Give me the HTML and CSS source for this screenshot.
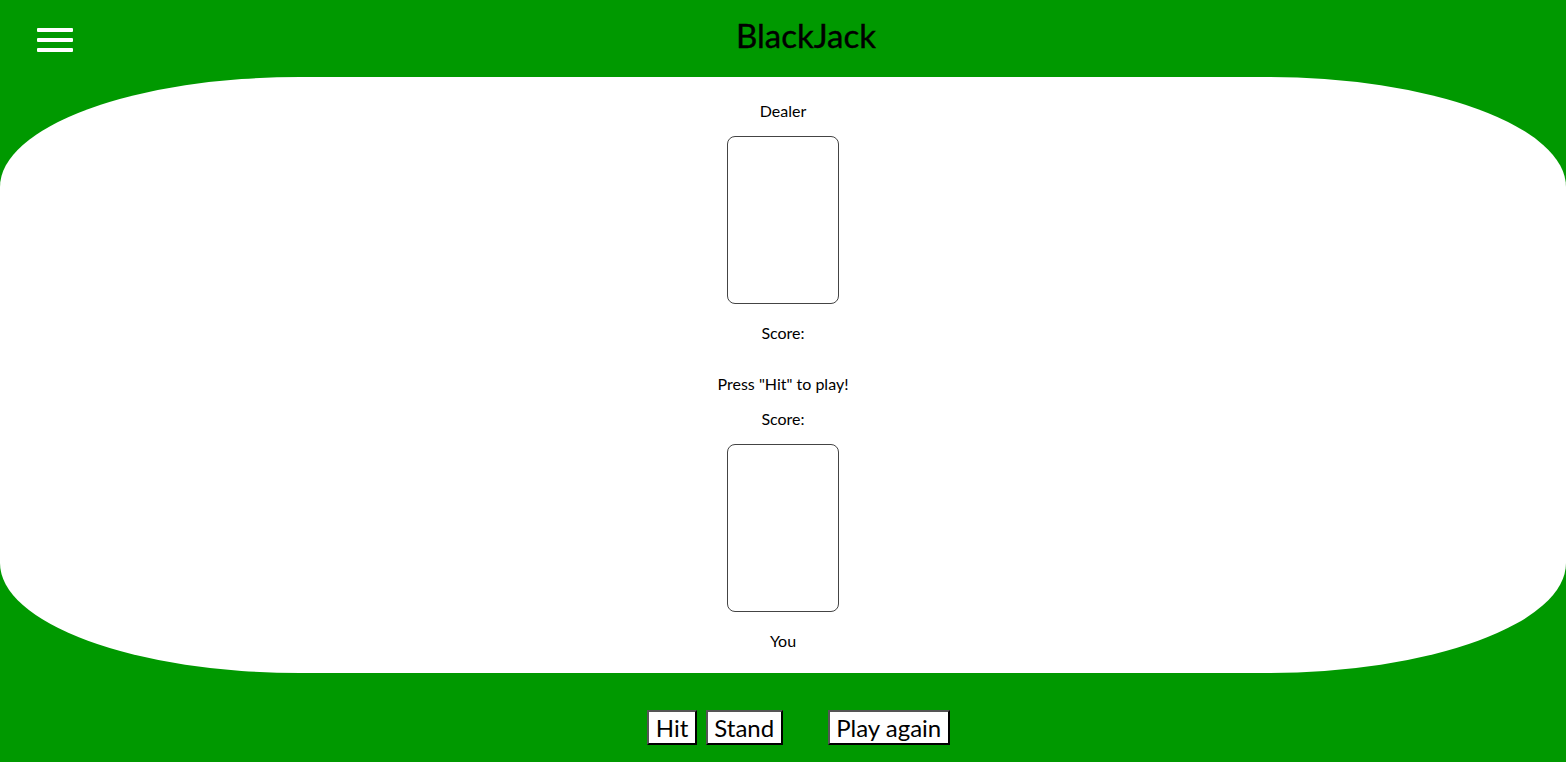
FILE: index.html
```html
<!DOCTYPE html>
<html lang="en">
<head>
<meta charset="utf-8">
<title>BlackJack</title>
<link rel="stylesheet" href="styles.css">
</head>
<body>
<header class="topbar">
  <button class="menu" aria-label="Menu">
    <span class="bar"></span>
    <span class="bar"></span>
    <span class="bar"></span>
  </button>
  <h1 class="title">BlackJack</h1>
  <div class="spacer"></div>
</header>
<main class="table">
  <p class="label first">Dealer</p>
  <div class="card"></div>
  <p class="label after-card">Score:</p>
  <p class="label message">Press "Hit" to play!</p>
  <p class="label score2">Score:</p>
  <div class="card"></div>
  <p class="label after-card">You</p>
</main>
<div class="controls">
  <button class="btn">Hit</button>
  <button class="btn">Stand</button>
  <button class="btn again">Play again</button>
</div>
</body>
</html>
```

FILE: styles.css
```css
* { box-sizing: border-box; }
html, body { margin: 0; padding: 0; }
body {
  background: #009900;
  font-family: Lato, "Liberation Sans", sans-serif;
  color: #000;
  height: 762px;
  overflow: hidden;
}
.topbar {
  display: flex;
  align-items: center;
  height: 77px;
}
.menu {
  width: 92px;
  height: 77px;
  padding: 0 19px 0 37px;
  margin: 0;
  border: 0;
  background: transparent;
  display: flex;
  flex-direction: column;
  justify-content: flex-start;
  gap: 6px;
  padding-top: 28px;
}
.bar {
  display: block;
  width: 36px;
  height: 4px;
  background: #fff;
  border-radius: 1px;
}
.title {
  flex: 1;
  margin: 0;
  text-align: center;
  font-size: 33px;
  font-weight: 400;
  line-height: 40px;
  padding-bottom: 8px;
  -webkit-text-stroke: 0.4px #000;
}
.spacer { width: 46px; }
.table {
  height: 596px;
  background: #fff;
  border-radius: 300px / 110px;
  display: flex;
  flex-direction: column;
  align-items: center;
  padding-top: 24px;
}
.label {
  margin: 0;
  font-size: 16px;
  line-height: 20px;
}
.card {
  width: 112px;
  height: 168px;
  border: 1px solid #444;
  border-radius: 8px;
  margin-top: 15px;
}
.after-card { margin-top: 19px; }
.message { margin-top: 31px; }
.score2 { margin-top: 15px; }
.controls {
  display: flex;
  justify-content: center;
  gap: 9px;
  padding-top: 37px;
  padding-left: 31px;
}
.btn {
  font-family: Lato, "Liberation Sans", sans-serif;
  font-size: 24px;
  line-height: 29px;
  height: 35px;
  padding: 1px 6.5px;
  background: #fff;
  color: #000;
  border: 2px solid;
  border-color: #555 #000 #000 #555;
  border-radius: 0;
}
.again { margin-left: 36px; }
```
